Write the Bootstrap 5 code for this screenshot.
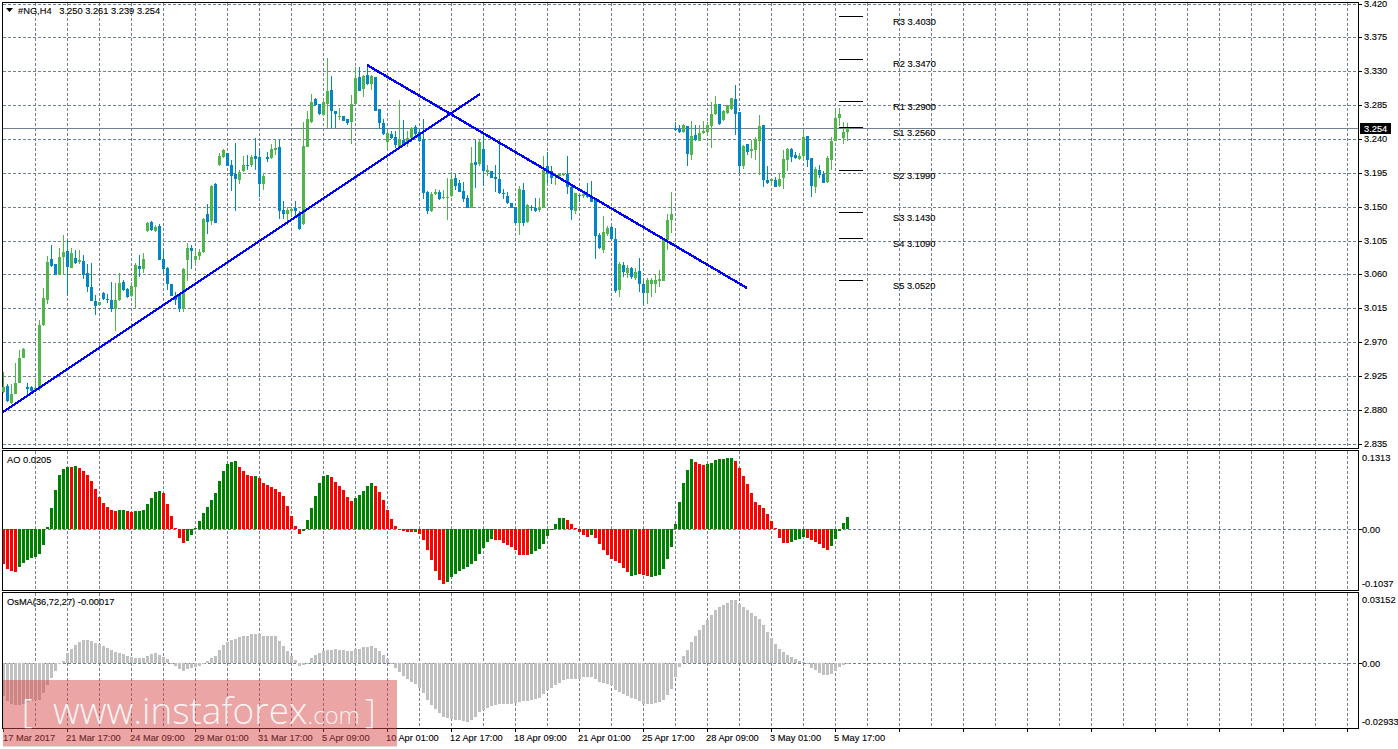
<!DOCTYPE html>
<html lang="en">
<head>
<meta charset="utf-8">
<title>#NG,H4</title>
<link href="https://cdn.jsdelivr.net/npm/bootstrap@5.3.0/dist/css/bootstrap.min.css" rel="stylesheet">
<style>
html,body{margin:0;padding:0;background:#fff;overflow:hidden}
.chart-stage{width:1398px;height:749px;position:relative}
.pane{width:1398px}
.pane text{font-family:"Liberation Sans",Arial,sans-serif;font-size:9.3px;fill:#000;stroke:#000;stroke-width:.12px}
.pane rect,.pane line{shape-rendering:crispEdges}
.grid-l{stroke:#708090;stroke-width:1;stroke-dasharray:3 2;fill:none}
.price-l{stroke:#708090;stroke-width:1}
.frame-l{stroke:#000;stroke-width:1}
.trend-l{stroke:#0000ff;stroke-width:2.4;shape-rendering:crispEdges}
.cup{fill:#4db848}.cdn{fill:#0087c9}
.aog{fill:#008000}.aor{fill:#ff0000}.osm{fill:#c0c0c0}
.tag-bg{fill:#000}
.pane text.tag-t{fill:#fff;stroke:#fff}
.wm{position:absolute;left:3px;top:680px;width:394px;height:66px;background:rgba(214,72,72,.49);color:rgba(255,255,255,.88);font-family:"Open Sans",sans-serif;font-weight:300;line-height:1;box-shadow:0 1px 0 #ddd}
.wm-b{position:absolute;left:19px;top:14px;font-size:33px;font-weight:300}
.wm-e{left:362px}
.wm-u{position:absolute;left:50px;top:11px;font-size:37px;white-space:nowrap}
.wm-u span{font-size:24px}
</style>
</head>
<body>
<div class="chart-stage d-flex flex-column">
  <svg id="p1" class="pane d-block flex-shrink-0" width="1398" height="449" viewBox="0 0 1398 449">
    <g id="p1g"></g>
    <g id="p1c"></g>
    <g class="pivots">
      <text x="893" y="25">R3 3.4030</text><text x="893" y="67">R2 3.3470</text><text x="893" y="110">R1 3.2900</text>
      <text x="893" y="136">S1 3.2560</text><text x="893" y="179">S2 3.1990</text><text x="893" y="221">S3 3.1430</text>
      <text x="893" y="247">S4 3.1090</text><text x="893" y="289">S5 3.0520</text>
    </g>
    <polygon points="6,8 13,8 9.5,12" fill="#000"/>
    <text x="18" y="14">#NG,H4&#160;&#160;&#160;3.250 3.261 3.239 3.254</text>
    <g>
      <text x="1364" y="7">3.420</text><text x="1364" y="40">3.375</text><text x="1364" y="74">3.330</text><text x="1364" y="108">3.285</text>
      <text x="1364" y="142">3.240</text><text x="1364" y="176">3.195</text><text x="1364" y="210">3.150</text><text x="1364" y="244">3.105</text>
      <text x="1364" y="277">3.060</text><text x="1364" y="311">3.015</text><text x="1364" y="345">2.970</text><text x="1364" y="379">2.925</text>
      <text x="1364" y="413">2.880</text><text x="1364" y="447">2.835</text>
    </g>
    <rect class="tag-bg" x="1360" y="123" width="31" height="11"/>
    <text class="tag-t" x="1364" y="132">3.254</text>
  </svg>
  <svg id="p2" class="pane d-block flex-shrink-0" width="1398" height="142" viewBox="0 449 1398 142">
    <g id="p2g"></g>
    <text x="7" y="463">AO 0.0205</text>
    <text x="1362" y="461">0.1313</text><text x="1362" y="533">0.00</text><text x="1362" y="587">-0.1037</text>
  </svg>
  <svg id="p3" class="pane d-block flex-shrink-0" width="1398" height="158" viewBox="0 591 1398 158">
    <g id="p3g"></g>
    <text x="7" y="605">OsMA(36,72,27) -0.00017</text>
    <text x="1362" y="603">0.03152</text><text x="1362" y="667">0.00</text><text x="1362" y="725">-0.02933</text>
    <g>
      <text x="3" y="741">17 Mar 2017</text><text x="66" y="741">21 Mar 17:00</text><text x="130" y="741">24 Mar 09:00</text>
      <text x="194" y="741">29 Mar 01:00</text><text x="258" y="741">31 Mar 17:00</text><text x="322" y="741">5 Apr 09:00</text>
      <text x="386" y="741">10 Apr 01:00</text><text x="450" y="741">12 Apr 17:00</text><text x="514" y="741">18 Apr 09:00</text>
      <text x="578" y="741">21 Apr 01:00</text><text x="642" y="741">25 Apr 17:00</text><text x="706" y="741">28 Apr 09:00</text>
      <text x="770" y="741">3 May 01:00</text><text x="834" y="741">5 May 17:00</text>
    </g>
  </svg>
  <div class="wm">
    <div class="wm-b">[</div>
    <div class="wm-u">www.instaforex<span>.com</span></div>
    <div class="wm-b wm-e">]</div>
  </div>
</div>
<script>
var A=[[0,411,425,365,430],[1,407,453,403,455],[0,433,458,403,462],[0,399,431,339,431],[0,324,399,300,400],[0,296,324,294,325],[1,411,418,399,432],[1,411,423,408,425],[0,415,420,390,422],[0,225,418,210,422],[0,144,225,113,228],[0,37,150,18,162],[1,27,48,-15,50],[1,42,75,42,75],[0,21,75,-6,75],[0,6,21,-45,75],[1,3,51,-30,135],[0,9,54,-6,54],[1,24,39,0,42],[0,30,36,0,42],[1,33,75,15,87],[1,69,111,42,126],[1,111,153,39,153],[1,153,168,135,195],[0,156,165,156,165],[1,129,147,126,150],[1,147,150,132,159],[1,150,177,96,186],[0,150,177,99,243],[0,99,150,69,153],[1,96,120,90,123],[1,117,141,114,144],[0,108,138,96,141],[0,45,111,39,177],[1,48,57,15,81],[0,27,57,9,69]];
var B=[[0,669,693,667,697],[1,666,690,664,692],[0,681,693,675,697],[1,678,780,672,780],[1,777,807,750,822],[1,804,852,800,870],[1,852,888,852,888],[1,888,900,875,915],[1,885,927,885,936],[0,807,927,804,936],[0,745,780,730,843],[1,745,752,735,807],[0,768,780,750,789],[0,756,768,748,780],[0,657,756,655,760],[1,642,666,612,702],[0,558,663,555,675],[1,552,669,550,669],[0,468,495,460,498],[0,450,471,446,474],[1,460,498,460,498],[1,495,528,480,573],[1,522,537,430,633],[0,516,540,510,552],[0,495,513,468,516],[1,495,498,465,510],[0,471,495,465,500],[1,468,477,414,510],[1,471,552,447,590],[0,528,552,520,570],[1,471,477,456,486],[0,447,474,432,477],[0,444,450,420,465],[1,441,633,420,657],[1,630,642,603,657],[0,630,642,622,675],[0,627,633,622,650],[1,624,633,603,650],[1,640,687,633,690],[0,438,672,366,675],[0,357,441,333,441],[0,306,366,282,369],[1,297,315,294,318],[1,312,342,312,345],[0,306,345,300,348],[0,273,312,174,384],[1,270,333,228,384],[1,333,342,333,384],[0,348,351,324,360],[1,348,363,348,363],[1,357,369,357,375],[0,312,366,285,432],[0,234,312,202,315],[1,231,273,200,273],[0,228,267,225,291],[1,225,252,192,255],[0,228,252,225,270],[1,231,333,231,333],[1,327,369,327,387],[1,369,402,357,405],[0,399,426,393,447],[1,402,414,393,417],[1,411,435,393,444],[0,420,441,300,441],[1,420,432,360,438],[0,414,432,393,441],[0,384,414,381,426],[1,381,402,375,408],[1,396,423,387,426],[1,417,579,357,597],[1,576,633,573,642],[0,582,633,576,636],[0,576,582,567,585],[1,576,597,570,600],[0,591,594,570,597],[0,590,594,534,660],[0,537,588,516,591],[1,534,558,522,570],[1,549,576,540,576],[1,573,597,546,606]];
var C=[[1,415,443,405,443],[0,309,443,261,443],[1,306,315,240,383],[0,246,312,240,318],[1,267,333,225,378],[0,330,336,315,348],[1,333,354,333,354],[1,351,357,315,396],[1,357,399,240,402],[1,399,402,387,417],[1,408,429,396,432],[1,429,443,429,443],[1,442,489,442,489],[0,387,489,378,525],[1,390,489,369,498],[0,435,486,432,489],[1,441,444,435,453],[1,444,453,414,456],[0,442,450,414,456],[0,330,443,288,443],[1,318,342,276,369],[1,333,354,318,372],[0,345,348,339,375],[0,342,348,339,350],[0,340,346,339,348],[1,342,381,288,402],[1,381,450,378,480],[0,399,453,399,462],[1,405,408,405,426],[0,402,408,396,414],[1,405,411,369,414],[1,408,426,363,426],[1,420,528,420,597],[1,525,564,519,567],[0,516,570,468,579],[0,504,522,498,528],[1,501,537,498,540],[1,537,693,504,699],[0,612,690,606,711],[1,615,636,606,651],[0,624,639,615,654],[1,624,651,621,657],[0,636,654,624,660],[1,633,672,594,696],[1,672,699,663,735],[0,660,699,654,732],[0,660,672,654,711],[0,660,672,642,699],[0,658,662,630,681],[0,540,663,537,663],[0,480,540,462,570],[0,462,480,396,519],[1,207,210,186,213],[1,207,216,195,219],[0,195,216,192,219],[1,198,282,198,318],[0,228,285,183,300],[1,225,240,195,243],[0,219,243,195,243],[0,213,219,183,222],[0,195,216,186,225],[0,162,198,126,264],[0,132,162,108,165],[1,132,192,132,195],[0,153,180,150,183],[0,135,159,135,162],[0,114,147,114,150],[1,117,162,75,225],[1,156,318,156,339],[0,258,318,255,327],[1,252,276,252,285],[0,267,273,240,294],[0,237,270,231,300],[0,198,243,165,345],[1,195,360,195,381],[1,360,369,318,372],[0,357,363,354,378],[1,360,381,351,381],[0,357,378,339,381],[0,297,354,270,387],[0,267,300,264,333],[1,267,291,264,306],[1,285,294,276,297],[0,288,297,279,300],[0,231,288,210,303],[1,228,300,228,321],[1,294,378,294,411],[0,327,381,321,399],[1,330,345,315,354],[1,342,369,333,369],[0,294,366,288,369],[0,243,300,231,330],[0,174,243,150,243],[0,162,174,144,198],[0,216,234,186,252],[0,204,216,189,243]];
var AO="-105 -120 -126 -129 -114 -102 -93 -87 -84 -75 -48 6 63 117 162 180 186 186 189 183 174 162 144 120 96 78 66 57 54 57 57 54 51 54 54 57 75 93 111 114 108 75 39 3 -27 -42 -36 -18 3 24 48 66 87 108 144 174 195 201 204 186 174 162 159 159 153 138 132 126 120 111 99 69 39 9 -15 -6 27 63 99 138 159 162 156 141 129 117 96 84 93 102 114 129 138 129 111 87 57 30 9 -3 -6 -9 -9 -9 -15 -33 -63 -93 -126 -153 -165 -159 -144 -135 -126 -120 -114 -105 -96 -75 -57 -39 -30 -33 -33 -42 -48 -54 -63 -78 -78 -78 -75 -66 -60 -45 -21 -3 15 33 33 27 15 3 -9 -18 -24 -18 -27 -45 -63 -78 -90 -96 -102 -117 -129 -141 -138 -135 -138 -141 -144 -141 -138 -120 -90 -54 15 81 138 177 210 201 195 192 195 198 207 210 210 213 213 204 183 159 135 108 81 72 63 45 24 3 -27 -42 -42 -39 -33 -30 -24 -27 -33 -39 -45 -57 -63 -51 -30 -6 18 36".split(" ").map(Number);
var OS="-100 -115 -123 -126 -125 -122 -118 -115 -112 -111 -90 -66 -44 -24 -3 6 30 42 54 63 69 69 66 60 57 51 45 39 33 30 27 21 18 15 15 15 21 27 30 24 18 12 0 -9 -18 -24 -18 -15 -12 -9 -3 6 15 21 39 54 63 69 72 78 81 81 87 87 87 81 81 81 81 66 51 36 21 9 -9 -6 -3 15 24 30 36 39 39 42 39 39 36 36 42 42 48 48 51 45 36 24 12 0 -15 -27 -39 -48 -57 -63 -75 -90 -111 -126 -138 -150 -162 -165 -168 -171 -171 -174 -177 -171 -162 -147 -141 -135 -129 -126 -123 -122 -122 -122 -120 -117 -114 -114 -111 -108 -105 -93 -81 -75 -66 -60 -51 -48 -48 -48 -48 -42 -42 -42 -48 -57 -60 -63 -66 -81 -87 -93 -99 -105 -108 -114 -123 -123 -123 -120 -117 -111 -96 -78 -42 -12 21 39 63 81 99 114 129 144 159 168 174 180 189 189 177 168 159 150 141 132 114 93 75 57 42 33 24 18 12 6 3 -3 -15 -21 -30 -36 -36 -33 -24 -12 -6 -2".split(" ").map(Number);

var aoGreen=[[4,16],[18,18],[29,30],[33,39],[46,58],[63,63],[75,81],[88,92],[103,103],[111,122],[132,140],[147,147],[157,158],[162,172],[176,182],[197,200],[207,211]];
function isG(k){for(var i=0;i<aoGreen.length;i++){if(k>=aoGreen[i][0]&&k<=aoGreen[i][1])return true}return false}

function R(x,y,w,h,c){return '<rect class="'+c+'" x="'+x+'" y="'+y+'" width="'+w+'" height="'+Math.max(h,1)+'"/>'}
function L(x1,y1,x2,y2,c){return '<line class="'+c+'" x1="'+x1+'" y1="'+y1+'" x2="'+x2+'" y2="'+y2+'"/>'}
function vgrid(t,b){var s='';for(var x=35.5;x<1358;x+=32){s+=L(x,t,x,b,'grid-l')}return s}
function frame(t,b,ticks){var s=L(2.5,t,2.5,b+.5,'frame-l')+L(1358.5,t,1358.5,b+.5,'frame-l')+L(2,t+.5,1359,t+.5,'frame-l')+L(2,b+.5,1359,b+.5,'frame-l');
  ticks.forEach(function(y){s+=L(1359,y+.5,1362,y+.5,'frame-l')});return s}

var hs=[4,37,71,105,139,173,207,241,274,308,342,376,410,444],g='',c='';
g+=vgrid(3,448);
hs.forEach(function(y){g+=L(3,y+.5,1358,y+.5,'grid-l')});
g+=L(3,128.5,1358,128.5,'price-l');
g+=frame(2,448,hs);
document.getElementById('p1g').innerHTML=g;
function candles(list,off,start){list.forEach(function(d,i){var k=start+i,cl=d[0]?'cdn':'cup',
  y=function(z){return Math.round(off+z/3)};
  c+=R(3+4*k,y(d[3]),1,y(d[4])-y(d[3]),cl);
  c+=R(2+4*k,y(d[1]),3,y(d[2])-y(d[1]),cl);})}
candles(A,250,0);candles(B,0,36);candles(C,60,116);
c+=L(3,412,480,94,'trend-l')+L(367,65,747,288,'trend-l');
[16,59,101,127,170,212,238,280].forEach(function(y){c+=L(839,y+.5,863,y+.5,'frame-l')});
document.getElementById('p1c').innerHTML=c;

var a='';a+=vgrid(451,590);a+=L(3,529.5,1358,529.5,'grid-l');
AO.forEach(function(v,k){var h=Math.round(Math.abs(v)/3),y=v>0?529-h:529;if(k==0){a+=R(3,y,2,h,'aor');return}a+=R(2+4*k,y,3,h,isG(k)?'aog':'aor')});
a+=frame(450,590,[529]);
document.getElementById('p2g').innerHTML=a;

var o='';o+=vgrid(593,728);o+=L(3,663.5,1358,663.5,'grid-l');
OS.forEach(function(v,k){var h=Math.round(Math.abs(v)/3),y=v>0?663-h:663;if(k==0){o+=R(3,y,2,h,'osm');return}o+=R(2+4*k,y,3,h,'osm')});
o+=frame(592,728,[663]);
for(var x=3;x<1358;x+=64){o+=L(x+.5,729,x+.5,732,'frame-l')}
document.getElementById('p3g').innerHTML=o;
</script>
<script src="https://cdn.jsdelivr.net/npm/bootstrap@5.3.0/dist/js/bootstrap.bundle.min.js"></script>
</body>
</html>
